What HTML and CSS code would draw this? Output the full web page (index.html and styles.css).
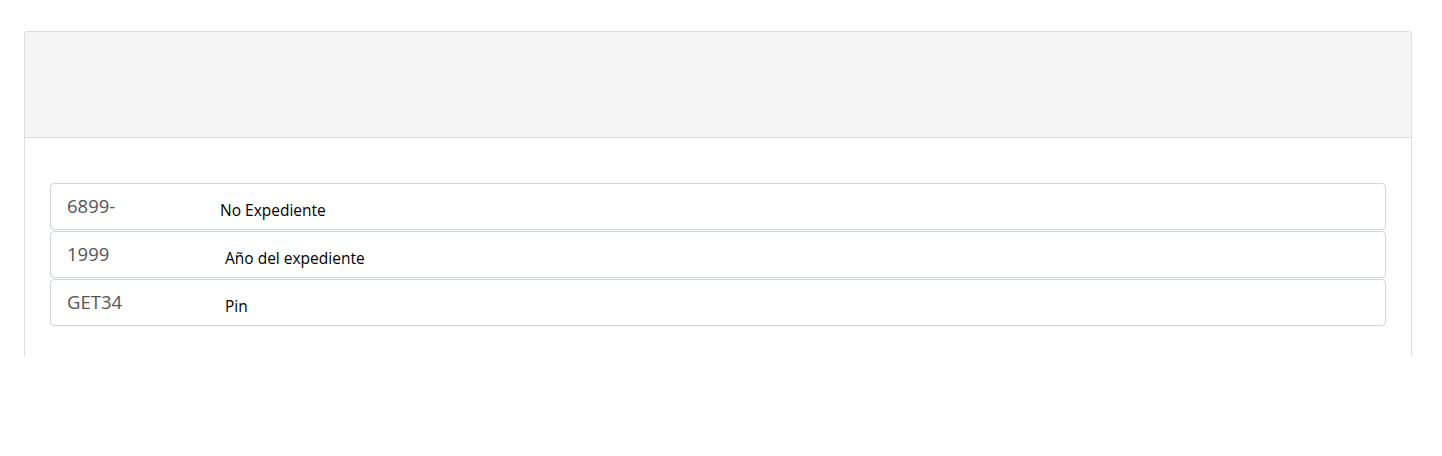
FILE: index.html
```html
<!DOCTYPE html>
<html lang="es">
<head>
<meta charset="utf-8">
<title>Expediente</title>
<link rel="stylesheet" href="styles.css">
</head>
<body>
<div class="panel">
  <div class="panel-heading"></div>
  <div class="panel-body">
    <div class="field">
      <span class="value">6899-</span>
      <span class="label label-first">No Expediente</span>
    </div>
    <div class="field">
      <span class="value">1999</span>
      <span class="label">Año del expediente</span>
    </div>
    <div class="field">
      <span class="value">GET34</span>
      <span class="label">Pin</span>
    </div>
  </div>
</div>
</body>
</html>
```

FILE: styles.css
```css
html, body {
  margin: 0;
  padding: 0;
  background: #ffffff;
}

body {
  padding: 31px 30px 0 24px;
  font-family: "Open Sans", "Noto Sans", "Liberation Sans", sans-serif;
}

.panel {
  border: 1px solid #dddddd;
  border-bottom: none;
  border-radius: 4px 4px 0 0;
  background: #ffffff;
  box-shadow: 0 1px 1px rgba(0, 0, 0, 0.05);
}

.panel-heading {
  height: 105px;
  background: #f5f5f5;
  border-bottom: 1px solid #dddddd;
  border-radius: 3px 3px 0 0;
}

.panel-body {
  padding: 45px 25px 30px 25px;
  display: flex;
  flex-direction: column;
  gap: 1px;
}

.field {
  height: 45px;
  border: 1px solid #ced4da;
  border-radius: 4px;
  display: flex;
  align-items: center;
  padding-left: 16px;
}

.value {
  width: 158px;
  flex: none;
  font-size: 18.5px;
  color: #555555;
  position: relative;
  top: -1px;
}

.label {
  font-size: 15.5px;
  color: #000000;
  position: relative;
  top: 3px;
}

.label-first {
  margin-left: -5px;
}
```
